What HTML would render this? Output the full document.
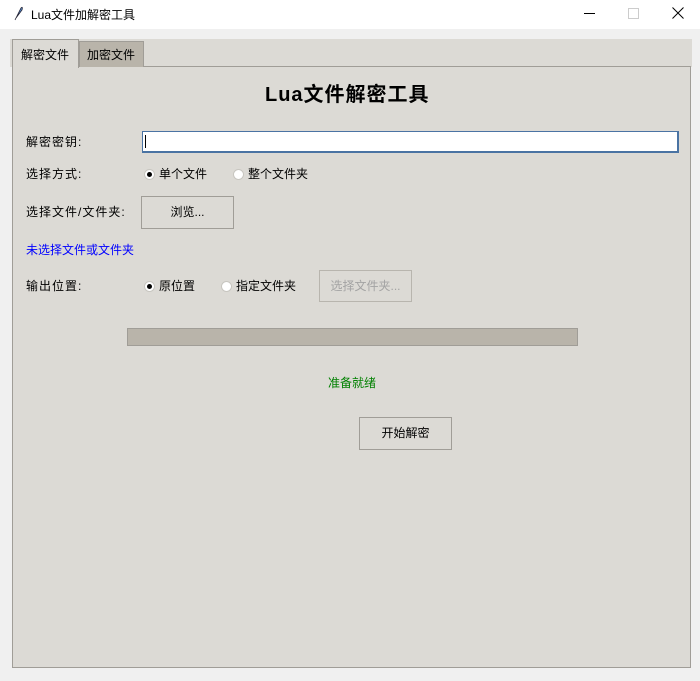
<!DOCTYPE html>
<html><head><meta charset="utf-8"><style>
body{margin:0;width:700px;height:681px;background:#f0f0f0;position:relative;overflow:hidden;font-family:"Liberation Sans","Noto Sans CJK SC",sans-serif;font-size:12px;color:#000}
.a{position:absolute;white-space:nowrap}
.btn{position:absolute;border:1px solid #a09d97;background:#dcdad5;text-align:center;box-sizing:border-box}
.rad{position:absolute;width:9px;height:9px;border-radius:50%;background:#fff;border:1px solid #c8c6c0}
</style></head><body>
<div class="a" style="left:0;top:0;width:700px;height:29px;background:#fff"></div>
<svg class="a" style="left:12px;top:6px" width="12" height="15" viewBox="0 0 12 15"><path d="M3 14 L9 2 Q11 0 10 4 L4 12 Z" fill="#5b8fd0" stroke="#223" stroke-width="0.8"/></svg>
<div class="a" style="left:31px;top:6px;font-size:12px">Lua文件加解密工具</div>
<div class="a" style="left:584px;top:13px;width:11px;height:1px;background:#000"></div>
<div class="a" style="left:628px;top:8px;width:9px;height:9px;border:1px solid #ccc"></div>
<svg class="a" style="left:672px;top:7px" width="12" height="12"><path d="M0.5 0.5L11.5 11.5M11.5 0.5L0.5 11.5" stroke="#000"/></svg>
<div class="a" style="left:10px;top:39px;width:682px;height:28px;background:#dcdad5"></div>
<div class="a" style="left:12px;top:66px;width:677px;height:600px;background:#dcdad5;border:1px solid #a09d97"></div>
<div class="a" style="left:79px;top:41px;width:63px;height:25px;background:#b9b4aa;border:1px solid #a09d97;border-bottom:none"></div>
<div class="a" style="left:12px;top:39px;width:65px;height:28px;background:#dcdad5;border:1px solid #a09d97;border-bottom:none"></div>
<div class="a" style="left:21px;top:46px">解密文件</div>
<div class="a" style="left:87px;top:46px">加密文件</div>
<div class="a" style="left:265px;top:78px;font-size:20px;font-weight:bold;letter-spacing:1px">Lua文件解密工具</div>
<div class="a" style="left:26px;top:133px;letter-spacing:1px">解密密钥:</div>
<div class="a" style="left:142px;top:131px;width:534px;height:19px;background:#fff;border:2px solid #4a73a3;border-width:1px 2px 2px 1px"></div>
<div class="a" style="left:145px;top:135px;width:1px;height:13px;background:#000"></div>
<div class="a" style="left:26px;top:165px;letter-spacing:1px">选择方式:</div>
<div class="rad" style="left:144px;top:169px"></div><div class="a" style="left:147px;top:172px;width:5px;height:5px;border-radius:50%;background:#000"></div>
<div class="a" style="left:159px;top:165px">单个文件</div>
<div class="rad" style="left:233px;top:169px"></div>
<div class="a" style="left:248px;top:165px">整个文件夹</div>
<div class="a" style="left:26px;top:203px;letter-spacing:1px">选择文件/文件夹:</div>
<div class="btn" style="left:141px;top:196px;width:93px;height:33px;line-height:31px">浏览...</div>
<div class="a" style="left:26px;top:241px;color:#0000ff">未选择文件或文件夹</div>
<div class="a" style="left:26px;top:277px;letter-spacing:1px">输出位置:</div>
<div class="rad" style="left:144px;top:281px"></div><div class="a" style="left:147px;top:284px;width:5px;height:5px;border-radius:50%;background:#000"></div>
<div class="a" style="left:159px;top:277px">原位置</div>
<div class="rad" style="left:221px;top:281px"></div>
<div class="a" style="left:236px;top:277px">指定文件夹</div>
<div class="btn" style="left:319px;top:270px;width:93px;height:32px;line-height:30px;color:#a3a3a3;border-color:#b8b5ae">选择文件夹...</div>
<div class="a" style="left:127px;top:328px;width:449px;height:16px;background:#b9b4aa;border:1px solid #a09d97"></div>
<div class="a" style="left:328px;top:374px;color:#008000">准备就绪</div>
<div class="btn" style="left:359px;top:417px;width:93px;height:33px;line-height:31px">开始解密</div>
</body></html>
